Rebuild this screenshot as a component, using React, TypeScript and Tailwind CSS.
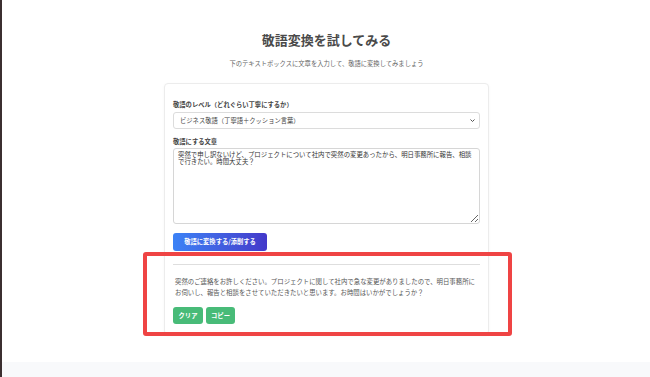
import { useState } from "react";

const FONT = "font-['Noto_Sans_CJK_JP','Noto_Sans',sans-serif]";

export default function App() {
  const [level, setLevel] = useState("business");
  const [text, setText] = useState(
    "突然で申し訳ないけど、プロジェクトについて社内で突然の変更あったから、明日事務所に報告、相談で行きたい。時間大丈夫？"
  );

  return (
    <div className={`relative w-[650px] h-[377px] overflow-hidden bg-white ${FONT}`}>
      {/* left window edge */}
      <div className="absolute left-0 top-0 bottom-0 w-[2px] bg-[#3b2f30]" />

      <div className="flex flex-col items-center h-[362px] pl-[3px]">
        <h1 className="mt-[31px] text-[13px] leading-[18px] font-bold text-[#4a4a4a]">
          敬語変換を試してみる
        </h1>
        <p className="mt-[10px] text-[6.3px] leading-[9px] text-[#666]">
          下のテキストボックスに文章を入力して、敬語に変換してみましょう
        </p>

        <div className="mt-[15px] w-[325px] rounded-[4px] border border-[#ececec] bg-white px-[8px] pt-[16px] pb-[10px] shadow-[0_1px_3px_rgba(0,0,0,0.04)]">
          <label className="block text-[6.3px] leading-[9px] font-bold text-[#444]">
            敬語のレベル（どれぐらい丁寧にするか）
          </label>
          <div className="relative mt-[3px]">
            <select
              value={level}
              onChange={(e) => setLevel(e.target.value)}
              className="block w-full h-[17px] appearance-none rounded-[3px] border border-[#dcdcdc] bg-white pl-[6px] text-[6.3px] text-[#444] outline-none"
            >
              <option value="business">ビジネス敬語（丁寧語＋クッション言葉）</option>
              <option value="polite">丁寧語</option>
            </select>
            <svg
              className="pointer-events-none absolute right-[5px] top-[6px] w-[5px] h-[5px]"
              viewBox="0 0 10 10"
              fill="none"
              stroke="#555"
              strokeWidth="2"
            >
              <path d="M1 3l4 4 4-4" />
            </svg>
          </div>

          <label className="mt-[8px] block text-[6.3px] leading-[9px] font-bold text-[#444]">
            敬語にする文章
          </label>
          <textarea
            value={text}
            onChange={(e) => setText(e.target.value)}
            className="mt-[2px] block w-full h-[76px] rounded-[3px] border border-[#d6d6d6] px-[4px] py-[2px] text-[6.4px] leading-[7px] text-[#333] outline-none resize-y"
          />

          <button className="mt-[9px] h-[18px] w-[94px] rounded-[3px] bg-gradient-to-r from-[#3b82f6] to-[#4338ca] text-[6.3px] font-bold text-white">
            敬語に変換する/添削する
          </button>

          <div className="mt-[13px] border-t border-[#dedede]" />

          <p className="mt-[11px] px-[2px] text-[6.4px] leading-[11px] text-[#555]">
            突然のご連絡をお許しください。プロジェクトに関して社内で急な変更がありましたので、明日事務所にお伺いし、報告と相談をさせていただきたいと思います。お時間はいかがでしょうか？
          </p>

          <div className="mt-[9px] flex gap-[3px]">
            <button className="h-[17px] w-[30px] rounded-[3px] bg-[#48bb78] text-[6.3px] font-bold text-white">
              クリア
            </button>
            <button className="h-[17px] w-[29px] rounded-[3px] bg-[#48bb78] text-[6.3px] font-bold text-white">
              コピー
            </button>
          </div>
        </div>
      </div>

      <div className="h-[15px] bg-[#f8f9fb]" />

      {/* highlight overlay */}
      <div className="absolute left-[143px] top-[252px] w-[369px] h-[84px] rounded-[3px] border-[4px] border-[#ef4444]" />
    </div>
  );
}
